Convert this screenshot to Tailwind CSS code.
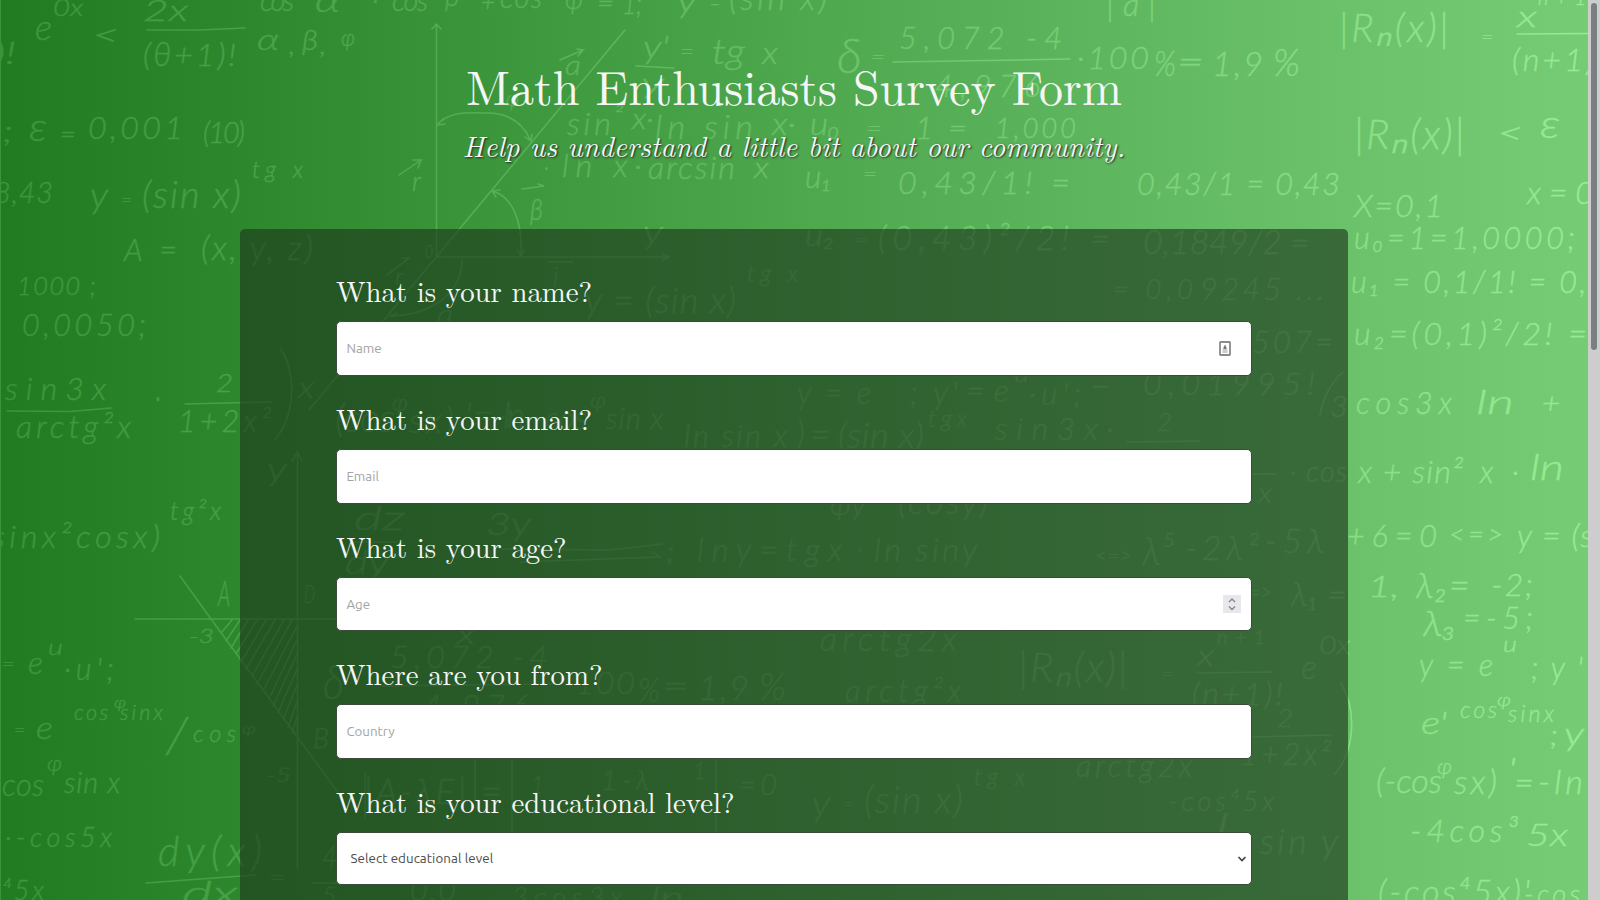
<!DOCTYPE html>
<html lang="en">
<head>
<meta charset="utf-8">
<title>Math Enthusiasts Survey Form</title>
<script src="https://cdn.jsdelivr.net/npm/@tailwindcss/browser@4"></script>
</head>
<body class="h-[900px] overflow-hidden">
<div class="relative flex h-[900px] w-[1600px] overflow-hidden">
  <div class="relative h-full w-[1588px] overflow-hidden bg-[linear-gradient(to_right,#217b21_0%,#2d882d_15%,#4ea84e_51%,#68bf68_81%,#75cc75_100%)]">
    <svg class="absolute inset-0 font-['Lato'] font-light italic" width="1588" height="900" viewBox="0 0 1588 900" aria-hidden="true">
      <defs>
        <linearGradient id="chalk" gradientUnits="userSpaceOnUse" x1="0" y1="0" x2="1588" y2="0">
          <stop offset="0" stop-color="#3c943a"/><stop offset=".5" stop-color="#69be66"/><stop offset="1" stop-color="#96ec92"/>
        </linearGradient>
      </defs>
      <g fill="none" stroke="url(#chalk)" stroke-width="1.5" stroke-linecap="round">
        <path d="M.5 0V899.9" stroke-width="1"/>
        <path d="M147 30L200 30L245 28M7 411L70 411.500L111 408M185 404L271 402M636 66L674 68M893 62L1070 59M1517 34L1588 33.500M146 883L255 875M380 686L560 684M1197 673L1272 672M1252 737L1331 735M1127 442L1200 441M312 883L337 883M352 542H396M500 549L610 550L663 544M520 562L660 557L653 552M1252 474H1276"/>
        <path d="M436.500 24V257.500M432 29L436.500 24L441 29M436 257H668.500M663 254L669 257L663 260M625 30L309 410M437 125C450 110 470 113 490 113C512 114 524 125 531 141M437 125L443 119M437 125L445 124M531 141L525 137M531 141L532 134M492 191C511 196 523 218 521 257M492 191L500 190M492 191L496 197M521 257L518 250M521 257L524 250M560 60L583 50L577 49M583 50L578 56M522 189L544 186L538 184M399 175L421 160H413M421 160L418 168M387 275L409 258L402 258M548 262H573M390 316C430 315 462 295 462 259M390 316L397 313"/>
        <path d="M135 619H337M297.500 452V868M292 461L297.500 452L302 461M180 576L211 619L337 791M232 620L221 633M240 620L226 641M248 620L231 648M257 620L236 654M266 620L241 662M275 620L246 669M284 620L252 676M292 620L257 684M297 626L263 691M297 640L269 699M297 654L273 706M297 669L278 713M297 685L283 720M297 702L288 727M297 717L292 733"/>
        <path d="M512 759V832M716 760V832M1320 415C1322 400 1331 382 1343 372M1341 683C1357 710 1355 750 1335 774M281 349C297 375 295 415 275 440M365 772V818M475 759V800"/>
      </g>
      <g id="formulas" fill="url(#chalk)" stroke="url(#chalk)" stroke-width=".4"></g>
    </svg>

    <main class="relative flex flex-col items-center pt-[55px] font-['Latin_Modern_Roman','CMU_Serif','Liberation_Serif',serif] text-[#f5f6f7]">
      <header class="flex h-[174px] flex-col items-center whitespace-nowrap">
        <h1 class="text-[48px] leading-[60px]">Math Enthusiasts Survey Form</h1>
        <p class="mt-[12px] text-[28.8px] leading-[36px] italic [text-shadow:1px_1px_2px_#222]">Help us understand a little bit about our community.</p>
      </header>
      <form class="flex h-[800px] w-[1108px] flex-col gap-[24.050px] rounded-[5px] bg-[#1f3a1f]/65 px-[96px] pt-[43.200px] text-[28.8px] leading-[36px]">
        <div class="flex flex-col gap-[13px]">
          <label>What is your name?</label>
          <div class="flex h-[54.700px] items-center justify-between rounded-[5px] border border-[#3b4a3a] bg-white pl-[9.400px] pr-[20px] font-['Ubuntu','Noto_Sans',sans-serif] text-[13.333px] leading-[18px] text-[#a3a3a3]">
            <span class="pt-[1.500px]">Name</span>
            <svg width="12" height="15" viewBox="0 0 12 15"><rect x="1" y="1" width="10" height="13" rx=".5" fill="#fff" stroke="#8b8b8b" stroke-width="1.800"/><path d="M6 3.500L7.500 6.500V8H4.500V6.500Z" fill="#777"/><path d="M3.500 9H8.500M3.500 11H8.500" stroke="#999" stroke-width="1"/></svg>
          </div>
        </div>
        <div class="flex flex-col gap-[13px]">
          <label>What is your email?</label>
          <div class="flex h-[54.700px] items-center rounded-[5px] border border-[#3b4a3a] bg-white px-[9.400px] font-['Ubuntu','Noto_Sans',sans-serif] text-[13.333px] leading-[18px] text-[#a3a3a3]"><span class="pt-[1.500px]">Email</span></div>
        </div>
        <div class="flex flex-col gap-[13px]">
          <label>What is your age?</label>
          <div class="flex h-[54.700px] items-center justify-between rounded-[5px] border border-[#3b4a3a] bg-white pl-[9.400px] pr-[10px] font-['Ubuntu','Noto_Sans',sans-serif] text-[13.333px] leading-[18px] text-[#a3a3a3]">
            <span class="pt-[1.500px]">Age</span>
            <svg class="bg-[#e8e8ec]" width="18" height="18" viewBox="0 0 18 18" fill="none" stroke="#85858f" stroke-width="1.400"><path d="M6 7L9 4L12 7M6 11.500L9 14.500L12 11.500"/></svg>
          </div>
        </div>
        <div class="flex flex-col gap-[13px]">
          <label>Where are you from?</label>
          <div class="flex h-[54.700px] items-center rounded-[5px] border border-[#3b4a3a] bg-white px-[9.400px] font-['Ubuntu','Noto_Sans',sans-serif] text-[13.333px] leading-[18px] text-[#a3a3a3]"><span class="pt-[1.500px]">Country</span></div>
        </div>
        <div class="flex flex-col gap-[13px]">
          <label>What is your educational level?</label>
          <div class="flex h-[52.800px] items-center justify-between rounded-[5px] border border-[#3b4a3a] bg-white pl-[13.400px] pr-[4px] font-['Ubuntu','Noto_Sans',sans-serif] text-[13.333px] leading-[18px] tracking-[0.080px] text-[#4b4b4b]">
            <span class="pt-[1.500px]">Select educational level</span>
            <svg width="10" height="8" viewBox="0 0 10 8" fill="none" stroke="#3f3f3f" stroke-width="1.600"><path d="M1.500 2L5 5.500L8.500 2"/></svg>
          </div>
        </div>
      </form>
    </main>
  </div>
  <div class="h-full w-[12px] bg-[#cdcdcd] pt-[3px] pl-[3px]"><div class="h-[347px] w-[6px] rounded-full bg-[#7c7f81]"></div></div>
</div>
<script>
// text, x, baseline, width, font size
const formulas = [
["0x",53,16,30,26],["e",35,40,17,40],["<",92,46,28,36],["2x",143,21,45,32],["(θ+1)!",143,66,93,36],[")!",-6,64,22,34],
["α",257,50,22,32],[",",289,54,6,28],["β",302,50,16,30],[",",320,54,6,28],["φ",341,46,14,26],
["cos",260,11,34,32],["α",315,12,25,36],["·",373,10,5,32],["cos",392,11,36,32],["β",445,6,14,32],["+",481,11,14,28],["cos",500,8,42,32],["φ",565,9,18,30],["=",597,12,17,28],["1;",622,14,20,32],
["y",677,12,20,36],["-",709,12,12,28],["(sin x)",729,10,98,38],
[";",3,142,10,32],["ε",29,141,18,44],["=",60,143,16,28],["0,001",88,139,95,36],["(10)",203,143,42,32],
["8,43",-6,203,59,32],["y",90,208,18,40],["=",121,207,11,22],["(sin x)",142,208,99,42],["tg x",252,178,51,26],["A =",124,261,53,34],["(x, y, z)",201,260,112,38],
["1000 ;",17,295,79,28],["0,0050;",22,336,124,34],["sin3x",5,400,101,36],["arctg²x",16,438,115,36],["·",155,410,6,40],["2",216,392,17,28],["1+2x²",178,432,93,34],["x",298,398,16,32],
["sinx²cosx)",-8,548,168,36],["tg²x",170,520,51,28],["y",267,480,20,34],["A",218,606,12,40],["-3",189,643,25,22],["D",304,603,11,28],["B",313,748,16,30],["-5",266,782,25,22],
["=",2,671,13,24],["e",28,674,15,34],["u",48,655,15,24],["·u';",64,680,50,34],["=",14,737,11,24],["e",36,739,17,34],["cos",74,720,34,24],["φ",114,708,12,18],["sinx",120,720,43,24],["/",166,753,22,54],["cos",193,742,43,26],["φ",242,734,14,18],
["cos",2,796,42,34],["φ",47,771,15,24],["sin x",64,793,56,32],["·-cos5x",5,847,107,30],["⁴5x",2,900,42,30],["dy(x)",158,866,104,46],["dx",182,905,56,38],["=",269,886,16,26],
["a",565,75,16,30],["φ",506,106,13,24],["r",412,191,9,30],["β",530,220,13,32],["y'",643,58,26,36],["y",641,93,23,30],["=",680,60,14,26],["tg",712,64,33,40],["x",762,64,16,34],
["δ",837,73,25,52],["=",871,64,14,24],["5,072 -4",899,49,163,34],["4,976",935,97,105,34],["·100",1077,69,72,36],["%",1154,76,22,40],["=",1177,73,27,38],["1,9",1212,76,51,38],["%",1273,76,27,42],
["sin",567,135,44,36],["²",614,122,9,24],["x·",632,129,22,32],["ln sin",655,139,98,38],["x·",772,135,24,34],["·",544,176,5,28],["ln x·",562,177,80,36],["arcsin",648,179,87,36],["x",754,178,15,32],
["u₀",810,135,30,36],["=",866,137,16,26],["1",915,139,18,34],["=",948,137,19,28],["1,000",995,138,81,30],["u₁",805,188,27,34],["=",863,181,14,24],["0,43/1! =",898,194,172,36],["0,43/1 = 0,43",1137,195,203,34],["u₂",805,246,30,34],["=",855,247,14,24],["(0,43)²/2! =",878,250,232,38],["0,1849/2 =",1143,254,167,38],["|a|",1106,16,50,36],
["|Rₙ(x)|",1339,42,110,44],["=",1481,44,12,22],["x",1517,27,20,32],["n+1",1538,5,48,22],["(n+1)",1512,71,82,36],["|Rₙ(x)|",1354,149,111,46],["<",1497,144,27,36],["ε",1540,138,20,44],["X=0,1",1354,217,89,36],["x=0",1527,204,67,36],
["u₀=1=1,0000;",1354,249,221,34],["u₁ = 0,1/1! = 0,",1351,293,235,34],["u₂=(0,1)²/2! =",1354,345,233,36],["3",1330,417,18,32],["cos3x",1356,414,96,34],["ln",1476,414,38,38],["+",1542,413,18,30],
["x + sin²",1358,483,105,36],["x ·",1480,483,39,34],["ln",1530,480,34,40],["· cos",1290,482,57,32],["+6=0",1347,547,90,34],["<=>",1449,544,54,30],["y = (s",1517,547,76,36],
["1,",1368,597,31,32],["λ₂=",1416,598,54,40],["-2;",1491,596,42,36],["λ₃",1423,636,33,40],["=-5;",1463,629,70,34],["y = e",1419,676,74,34],["u",1503,652,14,24],[";y'",1531,679,52,34],["e'",1421,734,26,34],["cos",1460,718,37,26],["φ",1497,706,14,20],["sinx",1508,722,46,26],[";",1550,745,8,30],["y",1564,745,20,36],
["(-cos",1376,793,66,38],["φ",1437,774,15,24],["sx)",1454,794,43,38],["'",1508,780,8,34],["=-ln",1514,794,69,38],["-4cos³",1410,842,108,36],["5x",1526,846,42,34],["(-cos⁴5x)'",1378,904,152,38],["-cos",1524,904,56,30],
["0",425,258,8,20],["r",395,284,8,24],["a",437,324,16,30],["i",553,287,5,30],["y",643,243,20,34],["y = (sin x)",585,313,151,40],["tg x",747,282,51,26],["= 0,0",1113,299,80,30],["9245 ...",1200,300,124,34],["507=",1252,353,81,34],["0,01995!",1143,395,172,36],
["y = e",797,404,74,34],["; y'",910,404,48,36],["= e",966,402,43,36],["u",1014,382,15,26],["·u';",1029,405,52,34],["-",1089,396,24,34],["(cos",335,432,60,44],["φ",392,411,16,26],["sx)",409,433,45,40],["' = -ln",465,428,60,40],["cos",545,429,42,34],["φ",590,408,16,24],["sin x",606,429,57,32],["ln sin x",684,447,103,34],[") =",796,447,35,40],["(sin x)",838,448,86,40],["tgx",928,427,39,26],["sin3x·",995,440,119,36],["2",1157,431,15,28],["x",1258,503,14,30],
["dz",354,530,51,38],["dy",345,574,44,38],["3y",486,535,45,36],["φy",830,515,36,32],["(cosy)",898,514,90,38],[";",666,561,9,28],["lny=tgx",697,561,145,36],["·",857,560,5,34],["ln siny",874,561,103,36],["<=>",1095,563,37,24],["λ⁵",1142,565,32,44],["-2λ²",1185,560,74,38],["-5λ",1265,553,59,38],["=>",1250,601,21,28],["λ₁ =",1291,606,56,38],
["x",457,644,18,30],["δ",323,699,21,52],["5,072 -4",390,668,158,36],["4,976",423,717,106,36],["·100",566,694,69,36],["%",638,702,22,38],["=",662,697,27,38],["1,9",698,700,51,38],["%",759,700,27,42],["arctg2x",820,651,137,38],["arctg²x",845,702,116,34],["|Rₙ(x)|",1018,682,110,46],["=",1161,681,12,22],["x",1197,666,17,32],["n+1",1217,644,48,22],["(n+1)!",1192,705,91,36],["e",1301,679,16,38],["0x",1319,654,31,28],["2",1277,727,16,28],["1+2x²",1240,765,91,34],
["|A-λE| =",364,804,138,40],["1",532,793,11,26],["1-λ",601,790,48,30],["1",694,779,11,26],["= 0",739,795,38,32],["y",812,816,18,40],["=",843,811,11,22],["(sin x)",864,813,99,42],["tg x",974,785,51,26],["arctg2x",1076,777,116,34],["-cos⁴5x",1168,811,106,30],["l",1217,833,12,30],["sin y",1260,854,78,40],["4",322,868,15,36],["5",322,905,14,28],["0,0",410,901,46,34],["3cos3x",512,907,110,30],["ln",650,907,34,30]
];
const layer = document.getElementById("formulas");
for (const [t, x, y, w, s] of formulas) {
  const el = document.createElementNS("http://www.w3.org/2000/svg", "text");
  el.textContent = t;
  el.setAttribute("x", x);
  el.setAttribute("y", y);
  el.setAttribute("font-size", s * 0.9);
  el.setAttribute("textLength", w);
  el.setAttribute("lengthAdjust", t.length > 2 ? "spacing" : "spacingAndGlyphs");
  layer.appendChild(el);
}
</script>
</body>
</html>
